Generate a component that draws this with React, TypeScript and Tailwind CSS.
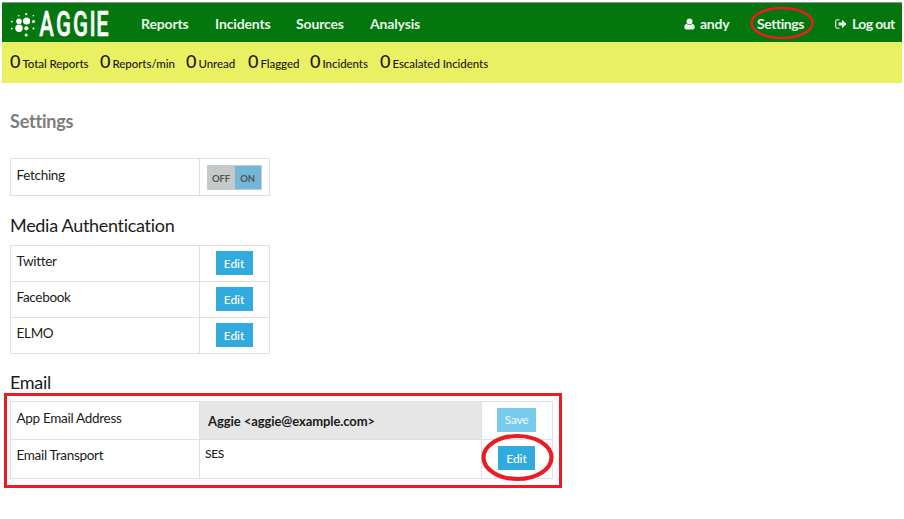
import React from "react";

const stats = [
  { label: "Total Reports", width: "w-[90px]" },
  { label: "Reports/min", width: "w-[86px]" },
  { label: "Unread", width: "w-[62px]" },
  { label: "Flagged", width: "w-[62px]" },
  { label: "Incidents", width: "w-[70px]" },
  { label: "Escalated Incidents", width: "w-[120px]" },
];

function Logo() {
  return (
    <svg width="110" height="38" viewBox="0 0 110 38" className="shrink-0 overflow-visible" fill="#fff">
      <circle cx="8" cy="18.3" r="2.8" />
      <circle cx="15.6" cy="18" r="3.6" />
      <circle cx="8" cy="25.3" r="3.7" />
      <circle cx="15.4" cy="25.3" r="2.1" />
      <circle cx="15.2" cy="11.2" r="1.1" />
      <circle cx="7.8" cy="12.8" r="0.8" />
      <circle cx="22.3" cy="12.8" r="0.8" />
      <circle cx="0.8" cy="18.6" r="0.9" />
      <circle cx="22.5" cy="18.6" r="1.5" />
      <circle cx="0.8" cy="25.6" r="0.9" />
      <circle cx="22.5" cy="25.6" r="1" />
      <circle cx="15.2" cy="32" r="1.5" />
      <text
        transform="translate(0 33) scale(0.62 1)"
        x="45.5 72.6 100 126.5 137.6"
        y="0"
        fontFamily="Roboto, sans-serif"
        fontWeight="500"
        fontSize="35.5"
        stroke="#fff"
        strokeWidth="0.5"
      >
        AGGIE
      </text>
    </svg>
  );
}

function UserIcon() {
  return (
    <svg width="11" height="12" viewBox="0 0 11 12" fill="currentColor">
      <circle cx="5.5" cy="3.5" r="3" />
      <path d="M2.6 5.7C.9 6 .3 7.5.3 9.6c0 1.2.8 2 2 2h6.4c1.2 0 2-.8 2-2 0-2.1-.6-3.6-2.3-3.9-1.6 1.6-4.200 1.6-5.800 0z" />
    </svg>
  );
}

function SignOutIcon() {
  return (
    <svg width="12" height="10" viewBox="0 0 12 10" fill="currentColor">
      <path d="M4.500.7H2.400C1.400.7.700 1.400.700 2.400v5.200c0 1 .7 1.700 1.700 1.700h2.100" fill="none" stroke="currentColor" strokeWidth="1.100" />
      <path d="M7 .8 11.700 5 7 9.200V6.600H3.600V3.400H7z" />
    </svg>
  );
}

function ActionButton({ children, faded = false }: { children: React.ReactNode; faded?: boolean }) {
  return (
    <button
      className={
        faded
          ? "h-6 w-[39px] bg-[#78cbeb] text-[12px] font-medium leading-6 tracking-[-0.3px] text-[#e9f8ff]"
          : "h-6 w-[37px] bg-[#31aade] text-[12px] font-medium leading-[25px] tracking-[-0.1px] text-white"
      }
    >
      {children}
    </button>
  );
}

export default function App() {
  return (
    <div className="relative h-[519px] w-[904px] overflow-hidden bg-white px-[2px] pt-[2px] font-['Lato',sans-serif] text-[#1b1b1b] [font-variant-ligatures:none]">
      <header className="flex h-10 w-[900px] items-stretch border-t border-[#8e8e96] bg-[#04760e] text-[14px] font-bold text-[#e6f5e8]">
        <div className="w-[139px] pl-[9px]">
          <Logo />
        </div>
        <nav className="flex flex-1 pt-[11px] leading-5 tracking-[-0.15px]">
          <span className="w-[74px]">Reports</span>
          <span className="w-[81px]">Incidents</span>
          <span className="w-[74px]">Sources</span>
          <span>Analysis</span>
        </nav>
        <div className="flex pt-[11px] leading-5 tracking-[-0.25px]">
          <span className="flex h-5 w-[73px] items-center gap-[5px]">
            <UserIcon />
            andy
          </span>
          <span className="w-[78px] tracking-[-0.45px]">Settings</span>
          <span className="flex h-5 w-[67px] items-center gap-[5px] whitespace-nowrap tracking-[-0.6px]">
            <SignOutIcon />
            Log out
          </span>
        </div>
      </header>
      <section className="flex h-[41px] w-[900px] bg-[#e9f162] pl-2 pt-[7px]">
        {stats.map((s) => (
          <div key={s.label} className={"flex items-baseline gap-[2px] whitespace-nowrap leading-6 " + s.width}>
            <span className="text-[18px] font-medium">0</span>
            <span className="text-[11.5px] font-medium tracking-[-0.06px]">{s.label}</span>
          </div>
        ))}
      </section>
      <main className="pl-2">
        <h1 className="mt-[26px] h-6 text-[18px] font-bold leading-6 tracking-[-0.2px] text-[#7c7c7c]">Settings</h1>
        <div className="mt-[25px] flex h-[38px] w-[260px] border border-[#e0e0e0] text-[13.5px] tracking-[-0.3px]">
          <div className="w-[189px] border-r border-[#e0e0e0] pl-[5.5px] pt-[6px] leading-5">Fetching</div>
          <div className="pl-[7px] pt-[6px]">
            <div className="flex h-[25px] w-[55px] border border-[#c4cace] text-[9.5px] font-bold leading-[25px] tracking-[-0.2px] text-[#555]">
              <span className="w-[27px] bg-[#c5c9ca] pr-[1px] text-center">OFF</span>
              <span className="flex-1 bg-[#73b6d7] pr-[1px] text-center">ON</span>
            </div>
          </div>
        </div>
        <h2 className="mt-[17px] h-6 text-[18px] leading-6 tracking-[-0.3px]">Media Authentication</h2>
        <div className="mt-[8px] w-[260px] border-x border-t border-[#e0e0e0] text-[13.5px] tracking-[-0.3px]">
          {["Twitter", "Facebook", "ELMO"].map((name) => (
            <div key={name} className="flex h-9 border-b border-[#e0e0e0]">
              <div className="w-[189px] border-r border-[#e0e0e0] pl-[5.5px] pt-[5px] leading-5">{name}</div>
              <div className="flex flex-1 justify-center pr-[1px] pt-[5px]">
                <ActionButton>Edit</ActionButton>
              </div>
            </div>
          ))}
        </div>
        <h2 className="mt-[16px] h-6 text-[18px] leading-6 tracking-[-0.3px]">Email</h2>
        <div className="mt-[7px] w-[543px] border border-[#e0e0e0] text-[13.5px] tracking-[-0.3px]">
          <div className="flex h-[38px] border-b border-[#e0e0e0]">
            <div className="w-[188px] pl-[5.5px] pt-[6px] leading-5">App Email Address</div>
            <div className="w-[283px] border-x border-[#e0e0e0] bg-[#e6e6e6] pl-[8px] pt-[9px] text-[13px] font-bold leading-5 tracking-[-0.08px]">
              Aggie &lt;aggie@example.com&gt;
            </div>
            <div className="flex flex-1 justify-center pr-[1px] pt-[6px]">
              <ActionButton faded>Save</ActionButton>
            </div>
          </div>
          <div className="flex h-[38px]">
            <div className="w-[188px] pl-[5.5px] pt-[5px] leading-5">Email Transport</div>
            <div className="w-[283px] border-x border-[#e0e0e0] pl-[5px] pt-[4px] text-[12px] font-medium leading-5 tracking-[-0.3px]">SES</div>
            <div className="flex flex-1 justify-center pr-[1px] pt-[6px]">
              <ActionButton>Edit</ActionButton>
            </div>
          </div>
        </div>
      </main>
      <svg className="pointer-events-none absolute left-0 top-0" width="904" height="519" fill="none" stroke="#ed1c24">
        <ellipse cx="782" cy="23" rx="30.5" ry="15" strokeWidth="2.400" />
        <rect x="5.5" y="394.5" width="555" height="92" strokeWidth="3" />
        <ellipse cx="517.5" cy="457.5" rx="34" ry="21.5" strokeWidth="4.200" />
      </svg>
    </div>
  );
}
